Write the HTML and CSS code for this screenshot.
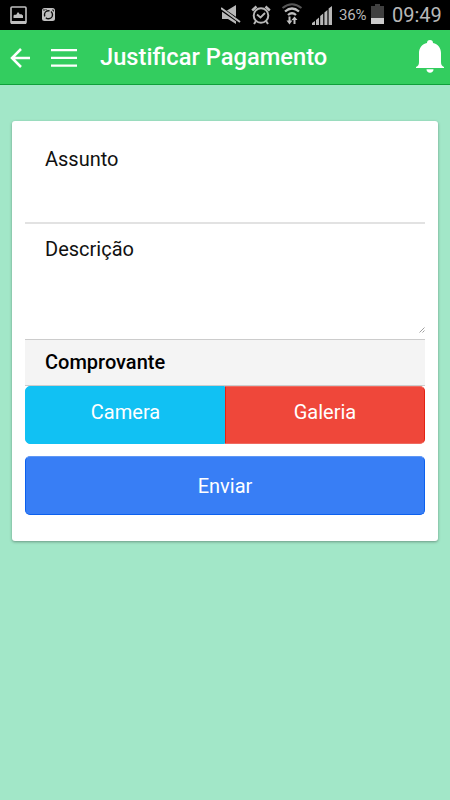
FILE: index.html
```html
<!DOCTYPE html>
<html lang="pt-BR">
<head>
    <meta charset="utf-8">
    <meta name="viewport" content="width=device-width, initial-scale=1">
    <title>Justificar Pagamento</title>
    <link rel="stylesheet" href="styles.css">
</head>
<body>
    <div class="status-bar">
        <svg class="icon-picture" width="17" height="19" viewBox="0 0 17 19">
            <rect x="1" y="1" width="15" height="15.5" rx="1" fill="none" stroke="#c0c0c0" stroke-width="1.6"/>
            <path d="M1 15.500h15v2H1z" fill="#c0c0c0" stroke="#c0c0c0"/>
            <path d="M3.500 12V9.500l1.500-1 1 .5 2-3 2 2.500 1-.5 2 1.500V12z" fill="#c0c0c0"/>
        </svg>
        <svg class="icon-camera" width="13" height="13" viewBox="0 0 13 13">
            <rect width="13" height="13" rx="2.500" fill="#c0c0c0"/>
            <circle cx="6.500" cy="6.700" r="4" fill="none" stroke="#111" stroke-width="1.400" stroke-dasharray="9 1.500"/>
            <path d="M2 1v2M4 1v1M10 2h1.500v1.500" stroke="#222" fill="none"/>
        </svg>

        <div class="status-right">
            <svg class="icon-mute" width="20" height="20" viewBox="0 0 20 20">
                <path d="M1 5.500h5L15 0v19l-8-5H1z" fill="#b8b8b8"/>
                <path d="M-1 3l21 14.500" stroke="#000" stroke-width="3.800"/>
                <path d="M0 3l19 14" stroke="#b8b8b8" stroke-width="2"/>
            </svg>
            <svg class="icon-alarm" width="20" height="20" viewBox="0 0 20 20" fill="none" stroke="#b8b8b8">
                <circle cx="10" cy="10.500" r="7.300" stroke-width="2"/>
                <path d="M6 9.500l3.500 3 4.500-4.500" stroke-width="1.800"/>
                <path d="M1.200 5.500L5.500 1.500M18.800 5.500L14.500 1.500" stroke-width="2.500"/>
                <path d="M5 16l-2 3M15 16l2 3" stroke-width="2"/>
            </svg>
            <svg class="icon-wifi" width="22" height="22" viewBox="0 0 22 22" fill="none">
                <path d="M1.500 5Q11-2.500 20.500 5" stroke="#555" stroke-width="2"/>
                <path d="M4 8.500q7-6 14 0M7 12q4-3.500 8 0" stroke="#c0c0c0" stroke-width="2.300"/>
                <path d="M8.500 13.500V19M13.500 21v-5" stroke="#c0c0c0" stroke-width="2"/>
                <path d="M5.500 17.500h6L8.500 21.500zM10.500 17h6l-3-3.500z" fill="#c0c0c0"/>
            </svg>
            <svg class="icon-signal" width="20" height="20" viewBox="0 0 20 20" fill="#b8b8b8">
                <path d="M0 20v-2l3-2v4zM4 20v-5l3-2.500V20zM8.200 20v-9l3-2.500V20zM12.400 20V7.500l3-2.500v15zM16.600 20V3.500L20 1v19z"/>
            </svg>
            <span class="battery-text">36%</span>
            <svg class="icon-battery" width="13" height="20" viewBox="0 0 13 20">
                <path d="M4 0h5v2h4v18H0V2h4z" fill="#404040"/>
                <path d="M0 14h13v6H0z" fill="#ccc"/>
            </svg>
            <span class="clock">09:49</span>
        </div>
    </div>

    <div class="header">
        <svg class="icon-back" width="20" height="20" viewBox="0 0 20 20" fill="none" stroke="#fff" stroke-width="2.500">
            <path d="M20 10H2M11 1L2 10l9 9"/>
        </svg>
        <svg class="icon-menu" width="26" height="18" viewBox="0 0 26 18" fill="#fff">
            <path d="M0 0h26v2.300H0zM0 7.800h26v2.300H0zM0 15.500h26v2.300H0z"/>
        </svg>
        <h1>Justificar Pagamento</h1>
        <svg class="icon-bell" width="28" height="33" viewBox="0 0 28 33" fill="#fff">
            <path d="M11 3a3 3 0 0 1 6 0c5 1 8 5 8 10v9c0 3 1 4 3 5v1H0v-1c2-1 3-2 3-5v-9C3 8 6 4 11 3z"/>
            <path d="M10.500 29.300h7c0 2-1.500 3.500-3.500 3.500s-3.500-1.500-3.500-3.500z"/>
        </svg>
    </div>

    <form class="card">
        <label class="item">
            <span>Assunto</span>
            <input type="text" name="assunto">
        </label>
        <label class="item item-textarea">
            <span>Descrição</span>
            <textarea name="descricao"></textarea>
            <svg class="resize-grip" width="6" height="6" viewBox="0 0 6 6" stroke="#888" stroke-width=".8">
                <path d="M.5 5.500l5-5M3.500 5.500l2-2"/>
            </svg>
        </label>
        <div class="divider">Comprovante</div>
        <div class="button-bar">
            <button type="button" class="button button-camera">Camera</button>
            <button type="button" class="button button-galeria">Galeria</button>
        </div>
        <button type="button" class="button button-enviar">Enviar</button>
    </form>
</body>
</html>
```

FILE: styles.css
```css
* {
    box-sizing: border-box;
}

body {
    font-family: Roboto, Arial, sans-serif;
    margin: 0;
    min-height: 100vh;
    background-color: #a2e7c8;
    color: #111;
    font-size: 20px;
}

svg {
    display: block;
    flex: none;
}

.status-bar {
    display: flex;
    height: 30px;
    padding: 0 9px 0 10px;
    background-color: #000;
    color: #b8b8b8;
}

.icon-picture {
    margin-top: 6px;
}

.icon-camera {
    margin: 8px 0 0 15px;
}

.status-right {
    display: flex;
    margin-left: auto;
}

.icon-mute {
    margin: 5px 10px 0 0;
}

.icon-alarm {
    margin: 5px 10px 0 0;
}

.icon-wifi {
    margin: 3px 9px 0 0;
}

.icon-signal {
    margin: 5px 7px 0 0;
}

.battery-text {
    width: 28px;
    font-size: 15px;
    line-height: 31px;
    letter-spacing: -0.2px;
}

.icon-battery {
    margin: 4px 8px 0 4px;
}

.clock {
    width: 49px;
    font-size: 20px;
    line-height: 31px;
}

.header {
    display: flex;
    align-items: center;
    height: 55px;
    padding: 0 6px 0 10px;
    background-color: #33cd5f;
    border-bottom: 1px solid #0fa03a;
    color: #fff;
}

.icon-menu {
    margin: 2px 0 0 21px;
}

.icon-back {
    margin-top: 1px;
}

h1 {
    margin: 0 0 0 23px;
    font-size: 23.7px;
    line-height: 30px;
    font-weight: 500;
}

.icon-bell {
    margin: 0 0 2px auto;
}

.card {
    margin: 36px 12px 0;
    padding: 12px 13px 26px;
    height: 420px;
    background-color: #fff;
    border-radius: 3px;
    box-shadow: 0 1px 3px rgba(0, 0, 0, 0.35);
}

.item {
    display: block;
    height: 91px;
    padding: 14px 0 0 20px;
    border-bottom: 2px solid #e2e2e2;
    line-height: 25px;
}

.item span {
    display: block;
}

.item-textarea {
    position: relative;
    height: 116px;
    padding-top: 13px;
    border-bottom: 1px solid #ccc;
}

input,
textarea {
    display: block;
    width: 100%;
    height: 40px;
    padding: 0;
    border: 0;
    outline: 0;
    background: transparent;
    font: inherit;
    resize: none;
}

textarea {
    height: 71px;
}

.resize-grip {
    position: absolute;
    right: 0;
    bottom: 6px;
}

.divider {
    height: 46px;
    padding-left: 20px;
    background-color: #f4f4f4;
    border-bottom: 1px solid #ccc;
    color: #000;
    font-weight: 500;
    line-height: 44px;
}

.button-bar {
    display: flex;
    height: 58px;
    margin-bottom: 12px;
}

.button {
    padding: 0 0 6px;
    border: 1px solid #11c1f3;
    color: #fff;
    font: 20px Roboto, Arial, sans-serif;
}

.button-camera {
    width: 200px;
    padding-left: 1px;
    background-color: #11c1f3;
    border-radius: 5px 0 0 5px;
}

.button-galeria {
    width: 200px;
    background-color: #ef473a;
    border-color: #ef6a60 #e42112;
    border-radius: 0 5px 5px 0;
}

.button-enviar {
    display: block;
    width: 100%;
    height: 59px;
    padding: 0;
    background-color: #387ef5;
    border-color: #5f97f5 #0c60ee #0c60ee;
    border-radius: 5px;
}
```
